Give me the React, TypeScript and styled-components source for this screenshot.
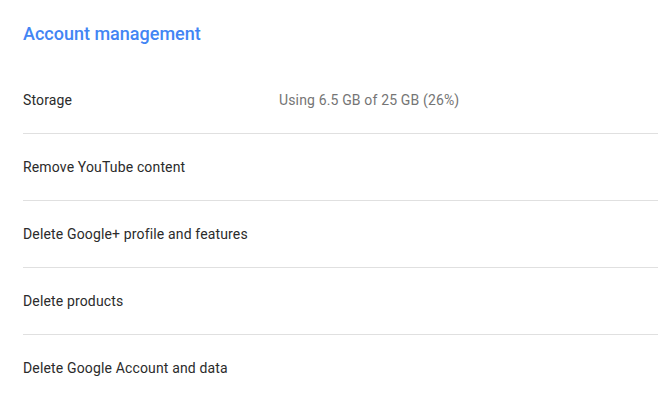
import React from "react";
import styled, { createGlobalStyle } from "styled-components";

const GlobalStyle = createGlobalStyle`
  html, body {
    margin: 0;
    padding: 0;
    background: #fff;
  }
  body {
    font-family: Roboto, "Liberation Sans", Arial, sans-serif;
  }
`;

const Section = styled.section`
  padding-left: 23px;
`;

const Title = styled.h2`
  margin: 0;
  height: 67px;
  display: flex;
  align-items: center;
  font-size: 18px;
  font-weight: 500;
  color: #4285f4;
`;

const List = styled.div`
  display: flex;
  flex-direction: column;
`;

const Row = styled.div<{ $last?: boolean }>`
  display: grid;
  grid-template-columns: 256px 1fr;
  align-items: center;
  height: 66px;
  border-bottom: 1px solid ${(p) => (p.$last ? "transparent" : "#e0e0e0")};
  font-size: 14px;
  letter-spacing: 0.15px;
`;

const Label = styled.span`
  color: #2b2b2b;
`;

const Value = styled.span`
  color: #757575;
`;

const rows = [
  { label: "Storage", value: "Using 6.5 GB of 25 GB (26%)" },
  { label: "Remove YouTube content" },
  { label: "Delete Google+ profile and features" },
  { label: "Delete products" },
  { label: "Delete Google Account and data" },
];

const App: React.FC = () => {
  return (
    <>
      <GlobalStyle />
      <Section>
        <Title>Account management</Title>
        <List>
          {rows.map((r, i) => (
            <Row key={r.label} $last={i === rows.length - 1}>
              <Label>{r.label}</Label>
              {r.value && <Value>{r.value}</Value>}
            </Row>
          ))}
        </List>
      </Section>
    </>
  );
};

export default App;
